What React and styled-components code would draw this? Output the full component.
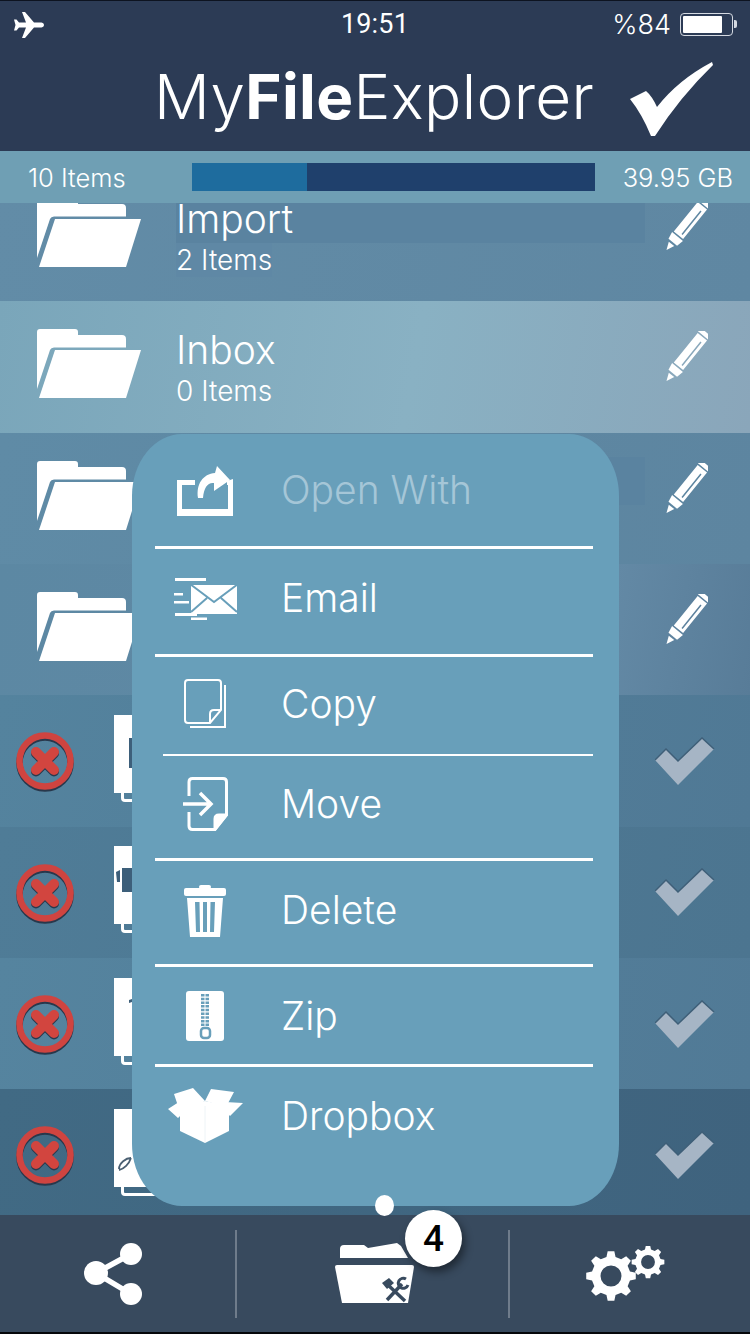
import React from 'react';
import styled, { createGlobalStyle } from 'styled-components';

const Global = createGlobalStyle`
  html, body { margin: 0; padding: 0; background: #0c1018; }
  * { box-sizing: border-box; }
`;
const FONT = `Inter, Roboto, "Liberation Sans", sans-serif`;
const MENU_BG = '#689fba';
const TAB_BG = '#384a5e';

const Screen = styled.div`
  position: relative; width: 750px; height: 1334px; display: flex; flex-direction: column;
  overflow: hidden; font-family: ${FONT}; font-weight: 300; color: #fff;
  border-top: 1px solid #0d1320; border-bottom: 2px solid #05070a;
`;
const TopBlock = styled.header`
  height: 150px; flex: none; background: #2c3b55; display: flex; flex-direction: column;
`;
const StatusBar = styled.div`
  height: 47px; flex: none; display: grid; grid-template-columns: 1fr auto 1fr; align-items: center;
  padding: 0 17px 0 14px;
`;
const StatusLeft = styled.div`display: flex; align-items: center;`;
const Clock = styled.div`font: 400 27px/1 Roboto, sans-serif; letter-spacing: .2px; margin-left: 3px;`;
const StatusRight = styled.div`display: flex; justify-content: flex-end; align-items: center; gap: 9px;`;
const Percent = styled.span`font-size: 27px; font-weight: 300;`;
const Battery = styled.div`
  position: relative; width: 53px; height: 23px; border: 1.5px solid #d5dae2; border-radius: 4px; padding: 2px;
  &::after { content: ''; position: absolute; right: -5px; top: 6px; width: 3px; height: 8px; background: #d5dae2; border-radius: 0 2px 2px 0; }
`;
const BatteryLevel = styled.div`height: 100%; width: 84%; background: #fff; border-radius: 1px;`;
const TitleRow = styled.div`
  flex: 1; display: flex; align-items: center; padding: 0 0 6px 154px; gap: 36px;
`;
const Title = styled.h1`
  margin: 0; font: 300 62px/1 ${FONT}; letter-spacing: .35px; color: #fff;
  b { font-weight: 700; }
`;
const TitleMark = styled.div`display: flex; margin-top: 5px;`;
const StatsBar = styled.div`
  height: 52px; flex: none; background: #6f9fb4; display: flex; align-items: center;
  padding: 0 17px 0 28px; font-size: 25.5px; z-index: 2;
`;
const StatCount = styled.span`width: 164px; flex: none;`;
const Storage = styled.div`width: 403px; height: 28px; background: #1f406c; flex: none;`;
const StorageUsed = styled.div`height: 100%; background: #1e6c9e;`;
const StatFree = styled.span`margin-left: auto;`;

const List = styled.main`flex: 1; min-height: 0; overflow: hidden;`;
const ListInner = styled.div`margin-top: -33px;`;
const Row = styled.div`
  height: 131.33px; display: flex; align-items: center; position: relative;
  background: ${p => p.$bg};
`;
const FolderSlot = styled.div`
  width: 176px; flex: none; padding: 0 0 6px 37px; display: flex;
`;
const Info = styled.div`flex: 1; min-width: 0; margin-right: 105px;`;
const RowTitle = styled.div`
  font-size: 39px; line-height: 48px; height: 48px; background: ${p => p.$shade ? '#5a83a0' : 'transparent'};
`;
const RowSub = styled.div`
  display: table; height: 34px; font-size: 28px; line-height: 34px; background: ${p => p.$shade ? '#5f88a5' : 'transparent'};
`;
const RowAction = styled.div`
  position: absolute; right: 42px; top: 30px; display: flex;
`;
const FileRowLead = styled.div`
  width: 114px; flex: none; padding-left: 16px; padding-top: 3px; display: flex;
`;
const DocSlot = styled.div`flex: none; padding-bottom: 5px; display: flex;`;
const CheckSlot = styled.div`margin-left: auto; margin-right: 35px; display: flex;`;

const Popup = styled.div`
  position: absolute; left: 132px; top: 433px; width: 487px; height: 772px; z-index: 3;
  background: ${MENU_BG}; border-radius: 50px / 62px; font-size: 39px;
`;
const MenuRow = styled.div`
  height: ${p => p.$h}px; display: flex; align-items: center;
  margin-right: 26px; margin-left: ${p => p.$inset || 23}px;
  border-bottom: ${p => p.$line}px solid ${p => p.$line ? '#fff' : 'transparent'};
  color: ${p => p.$off ? '#a5c6d7' : '#fff'};
`;
const MenuIcon = styled.div`
  width: 102px; flex: none; display: flex; justify-content: center;
  margin-left: ${p => p.$shift}px; margin-top: ${p => p.$lift || 0}px;
`;
const MenuLabel = styled.span`margin-left: ${p => p.$gap}px; margin-top: ${p => p.$lift || 0}px;`;
const Dot = styled.div`
  position: absolute; left: 243px; bottom: -10px; width: 19px; height: 21px; border-radius: 50%; background: #fff;
`;

const TabBar = styled.nav`
  position: relative; height: 117px; flex: none; background: ${TAB_BG}; z-index: 2;
  display: grid; grid-template-columns: 235px 2px 271px 2px 1fr; align-items: center;
`;
const TabCell = styled.div`display: flex; justify-content: center; margin-left: ${p => p.$left || 0}px;`;
const TabDivider = styled.div`height: 88px; width: 2px; background: #6f7c8b;`;
const Badge = styled.div`
  position: absolute; left: 405px; top: -5px; width: 57px; height: 57px; border-radius: 50%;
  background: #fff; color: #000; font: 500 37px/57px Roboto, sans-serif; text-align: center;
  box-shadow: 3px 5px 8px rgba(0,0,0,.45);
`;

const Folder = () => (
  <svg width="104" height="69" viewBox="0 0 104 69" fill="#fff">
    <path d="M0 3Q0 0 3 0H38Q41 0 41 3V6H85Q89 6 89 10V18.5H17Q14 18.5 13 21L0 60Z" />
    <path d="M18 21H104L89 69H2Z" />
  </svg>
);

const Pencil = () => (
  <svg width="43" height="52" viewBox="0 0 43 52">
    <g transform="rotate(39 21 26)">
      <rect x="13" y="-6" width="16" height="4.5" rx="2" fill="#fff" />
      <path fillRule="evenodd" fill="#fff" d="M15 0H27V38H15ZM22.5 5V35H24V5Z" />
      <path d="M14 39.5H28L26.5 47H15.5Z" fill="#fff" />
      <path d="M17.5 49H24.5L21 57Z" fill="#fff" />
    </g>
  </svg>
);

const GreyCheck = () => (
  <svg width="60" height="48" viewBox="0 0 60 48">
    <path d="M0 23L11 12L23 24L47 1L59 12L23 48Z" fill="#a6b5c5" />
    <path d="M0 23L11 12L23 24L47 1L59 12" fill="none" stroke="#3f5f78" strokeWidth="1.5" />
  </svg>
);

const RemoveIcon = () => (
  <svg width="58" height="60" viewBox="0 0 58 60">
    <circle cx="29" cy="31" r="25.5" fill="none" stroke="#28384c" strokeWidth="6.5" />
    <circle cx="29" cy="29" r="25.5" fill="none" stroke="#cf4440" strokeWidth="6.5" />
    <path d="M20 21.5L38 39.5M38 21.5L20 39.5" stroke="#2a3a4e" strokeWidth="10" strokeLinecap="round" />
    <path d="M20 20L38 38M38 20L20 38" stroke="#d2453f" strokeWidth="10" strokeLinecap="round" />
  </svg>
);

const DocGlyph = ({ kind }) => {
  if (kind === 'block') return <rect x="15" y="23" width="30" height="30" fill="#3d5f7a" />;
  if (kind === 'image') return <path d="M2 26L6 24V36L3 36ZM8 22H24V46H8Z" fill="#3d5f7a" />;
  if (kind === 'mark') return <path d="M15 22L18 21V24L15 25Z" fill="#3d5f7a" />;
  return <path d="M5 60C5 54 12 49 17 49M5 61C10 60 15 55 17 49" fill="none" stroke="#4a5f72" strokeWidth="1.8" />;
};
const Doc = ({ kind }) => (
  <svg width="62" height="87" viewBox="0 0 62 87">
    <rect x="0" y="0" width="60" height="78" fill="#fff" />
    <path d="M8.5 78V83Q8.5 85.5 11 85.5H60" fill="none" stroke="#fff" strokeWidth="3" />
    <DocGlyph kind={kind} />
  </svg>
);

const Airplane = () => (
  <svg width="30" height="26" viewBox="0 0 30 26" fill="#fff">
    <path d="M30 13C30 11 28 10.5 26 10.5H20L11 0H8L12 10.5H5L2.5 7.5H0L1.5 13L0 18.5H2.5L5 15.5H12L8 26H11L20 15.5H26C28 15.5 30 15 30 13Z" />
  </svg>
);

const BigCheck = () => (
  <svg width="84" height="75" viewBox="0 0 84 75" fill="#fff">
    <path d="M0 37L16 29Q22 34 27 45Q48 18 82 0L83 3Q50 35 25 74L21 74Q12 52 0 37Z" />
  </svg>
);

const OpenWithIcon = () => (
  <svg width="56" height="50" viewBox="0 0 56 50" fill="#fff">
    <path fillRule="evenodd" d="M0 14H18V19H5V43H51V19H50V15L56 13V50H0Z" />
    <path d="M40 0L53 14L37 25V17C31 16 27 21 26 32H21C19 18 26 8 38 7Z" />
  </svg>
);
const EmailIcon = () => (
  <svg width="64" height="42" viewBox="0 0 64 42" fill="#fff">
    <rect x="1" y="0" width="31" height="3" /><rect x="0" y="15" width="9" height="2.5" />
    <rect x="0" y="23" width="15" height="2.5" /><rect x="1" y="35" width="22" height="3" />
    <rect x="17" y="39.5" width="16" height="2.5" />
    <path d="M17 7H63V36H17Z" />
    <path d="M16 6L40 24L64 6M17 34L33 20M47 20L63 34" fill="none" stroke={MENU_BG} strokeWidth="2" />
  </svg>
);
const CopyIcon = () => (
  <svg width="42" height="50" viewBox="0 0 42 50" fill="none" stroke="#fff" strokeWidth="2">
    <path d="M4 1H34Q37 1 37 4V31L26 44H4Q1 44 1 41V4Q1 1 4 1Z" />
    <path d="M26 44V35Q26 31 30 31H37" />
    <path d="M41 6V48H6" />
  </svg>
);
const MoveIcon = () => (
  <svg width="45" height="54" viewBox="0 0 45 54" fill="none" stroke="#fff" strokeWidth="3">
    <path d="M6 19V5Q6 1.5 9.5 1.5H40Q43.5 1.5 43.5 5V38L32 52.5H9.5Q6 52.5 6 49V35" />
    <path d="M32 52V42Q32 38 36 38H43L32 52Z" fill="#fff" />
    <path d="M0 27H27M17 16L28 27L17 38" strokeWidth="3.5" />
  </svg>
);
const TrashIcon = () => (
  <svg width="42" height="52" viewBox="0 0 42 52" fill="#fff">
    <rect x="15" y="0" width="12" height="4" rx="2" />
    <rect x="0" y="3" width="42" height="8" rx="2" />
    <path fillRule="evenodd" d="M3 13H39L36 52H6ZM11 17L12 47H16L15.5 17ZM19 17V47H23V17ZM26.5 17L26 47H30L31 17Z" />
  </svg>
);
const ZipIcon = () => (
  <svg width="38" height="50" viewBox="0 0 38 50">
    <rect width="38" height="50" rx="3" fill="#fff" />
    <path d="M19 3V36" stroke={MENU_BG} strokeWidth="8" strokeDasharray="2.5 1.2" />
    <path d="M19 3V36" stroke="#fff" strokeWidth="1" />
    <rect x="15" y="37" width="9" height="10" rx="3" fill="none" stroke={MENU_BG} strokeWidth="2.5" />
  </svg>
);
const BoxIcon = () => (
  <svg width="75" height="55" viewBox="0 0 75 55" fill="#fff">
    <path d="M12 18L37 13L61 18V43L37 55L12 43Z" />
    <path d="M6 6L25 0L37 13L12 24ZM43 1L66 4L58 19L37 13Z" />
    <path d="M0 21L14 12L16 24L10 30ZM57 14L75 15L62 28L58 24Z" />
    <path d="M37 18V54" stroke="#eef4f7" strokeWidth="1" />
  </svg>
);

const ShareIcon = () => (
  <svg width="58" height="62" viewBox="0 0 58 62" fill="#fff">
    <path d="M47 11L12 30L47 51" fill="none" stroke="#fff" strokeWidth="5.5" />
    <circle cx="47" cy="11" r="11" /><circle cx="12" cy="30" r="12" /><circle cx="47" cy="51" r="11" />
  </svg>
);
const ToolsFolderIcon = () => (
  <svg width="80" height="62" viewBox="0 0 80 62" fill="#fff">
    <path d="M6 15V6Q6 2 10 2H30L34 5L63 0L67 3L74 15Z" />
    <path d="M1 24Q1 22 3 22H78Q80 22 80 24L74 60H8Z" />
    <g fill="none" stroke={TAB_BG} strokeWidth="3.5">
      <path d="M54 42L71 58" />
      <path d="M68 41L53 57" />
      <path d="M72 36A5 5 0 1 0 74 42" strokeWidth="3" />
    </g>
    <path d="M48 40L55 35L60 40L53 46Z" fill={TAB_BG} />
  </svg>
);
const gearPath = (cx, cy, r, teeth) => {
  const pts = [];
  const outer = r, inner = r * 0.78, step = (Math.PI * 2) / teeth;
  for (let i = 0; i < teeth; i++) {
    const a = i * step;
    [[-0.3, inner], [-0.17, outer], [0.17, outer], [0.3, inner]].forEach(([f, rad]) => {
      const t = a + f * step;
      pts.push(`${(cx + rad * Math.cos(t)).toFixed(2)} ${(cy + rad * Math.sin(t)).toFixed(2)}`);
    });
  }
  const h = r * 0.42;
  return `M${pts.join('L')}ZM${cx - h} ${cy}a${h} ${h} 0 1 0 ${h * 2} 0a${h} ${h} 0 1 0 ${-h * 2} 0Z`;
};
const GearsIcon = () => (
  <svg width="80" height="56" viewBox="0 0 80 56" fill="#fff">
    <path fillRule="evenodd" d={gearPath(25, 30, 25, 8)} />
    <path fillRule="evenodd" d={gearPath(62, 16, 16.5, 8)} />
  </svg>
);

const folders = [
  { name: 'Import', sub: '2 Items', shade: true, subShade: true, bg: 'linear-gradient(100deg,#628ca7,#5f87a2)' },
  { name: 'Inbox', sub: '0 Items', bg: 'linear-gradient(100deg,#7aa6ba 0%,#89b1c3 55%,#8aa6ba 100%)' },
  { name: '', sub: '', shade: true, bg: 'linear-gradient(100deg,#5f8ba6,#5d85a0)' },
  { name: '', sub: '', bg: 'linear-gradient(100deg,#5c88a3,#6389a5 80%,#587c98)' },
];
const files = [
  { kind: 'block', bg: 'linear-gradient(100deg,#54839e,#507995)' },
  { kind: 'image', bg: 'linear-gradient(100deg,#4f7c97,#4c7590)' },
  { kind: 'mark', bg: 'linear-gradient(100deg,#55849f,#517a96)' },
  { kind: 'pdf', bg: 'linear-gradient(100deg,#416a84,#3f637e)' },
];
const menu = [
  { label: 'Open With', icon: <OpenWithIcon />, h: 115, line: 3, off: true, iconLift: 1, lift: -1 },
  { label: 'Email', icon: <EmailIcon />, h: 108, line: 3, iconShift: 1, iconLift: -6, lift: -8 },
  { label: 'Copy', icon: <CopyIcon />, h: 99, line: 2, inset: 31, iconLift: -3, lift: -5 },
  { label: 'Move', icon: <MoveIcon />, h: 105, line: 3, iconLift: -7, lift: -7 },
  { label: 'Delete', icon: <TrashIcon />, h: 106, line: 3, iconLift: -3, lift: -7 },
  { label: 'Zip', icon: <ZipIcon />, h: 100, line: 3 },
  { label: 'Dropbox', icon: <BoxIcon />, h: 100, line: 0, iconLift: -4, lift: -4 },
];

export default function App() {
  return (
    <Screen>
      <Global />
      <TopBlock>
        <StatusBar>
          <StatusLeft><Airplane /></StatusLeft>
          <Clock>19:51</Clock>
          <StatusRight>
            <Percent>%84</Percent>
            <Battery><BatteryLevel /></Battery>
          </StatusRight>
        </StatusBar>
        <TitleRow>
          <Title>My<b>File</b>Explorer</Title>
          <TitleMark><BigCheck /></TitleMark>
        </TitleRow>
      </TopBlock>
      <StatsBar>
        <StatCount>10 Items</StatCount>
        <Storage><StorageUsed style={{ width: '28.5%' }} /></Storage>
        <StatFree>39.95 GB</StatFree>
      </StatsBar>
      <List>
        <ListInner>
          {folders.map((f, i) => (
            <Row key={i} $bg={f.bg}>
              <FolderSlot><Folder /></FolderSlot>
              <Info>
                <RowTitle $shade={f.shade}>{f.name}</RowTitle>
                <RowSub $shade={f.subShade}>{f.sub}</RowSub>
              </Info>
              <RowAction><Pencil /></RowAction>
            </Row>
          ))}
          {files.map((f, i) => (
            <Row key={i} $bg={f.bg}>
              <FileRowLead><RemoveIcon /></FileRowLead>
              <DocSlot><Doc kind={f.kind} /></DocSlot>
              <CheckSlot><GreyCheck /></CheckSlot>
            </Row>
          ))}
        </ListInner>
      </List>
      <Popup>
        {menu.map(m => (
          <MenuRow key={m.label} $h={m.h} $line={m.line} $off={m.off} $inset={m.inset}>
            <MenuIcon $shift={(m.inset ? -9 : -1) + (m.iconShift || 0)} $lift={m.iconLift}>{m.icon}</MenuIcon>
            <MenuLabel $gap={25 - (m.iconShift || 0)} $lift={m.lift}>{m.label}</MenuLabel>
          </MenuRow>
        ))}
        <Dot />
      </Popup>
      <TabBar>
        <TabCell $left={-10}><ShareIcon /></TabCell>
        <TabDivider />
        <TabCell $left={2}><ToolsFolderIcon /></TabCell>
        <TabDivider />
        <TabCell $left={-8}><GearsIcon /></TabCell>
        <Badge>4</Badge>
      </TabBar>
    </Screen>
  );
}
